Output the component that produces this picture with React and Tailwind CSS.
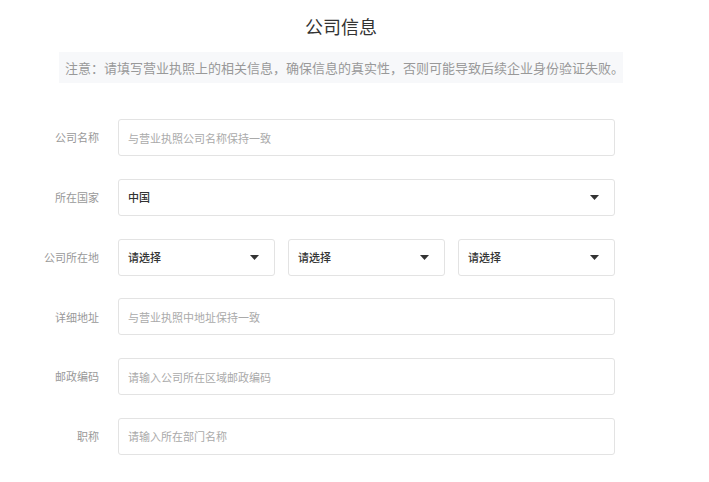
import React from 'react';

const font = { fontFamily: '"PingFang SC", "Noto Sans CJK SC", "Noto Sans", sans-serif' };

function Caret() {
    return (
        <svg width="9" height="5" viewBox="0 0 9 5" className="shrink-0">
            <path d="M0 0 H9 L4.5 5 Z" fill="#333" />
        </svg>
    );
}

function Row({ label, children }) {
    return (
        <div className="flex items-center h-[37px]">
            <label className="w-[100px] pr-[1px] text-right text-[11px] text-[#999]">{label}</label>
            <div className="ml-[18px] w-[497px] flex gap-[13px]">{children}</div>
        </div>
    );
}

function TextInput({ placeholder }) {
    return (
        <input
            className="w-full h-[37px] rounded-[3px] border border-[#e3e3e3] bg-white px-[9px] text-[11px] text-[#333] placeholder:text-[#aaa] outline-none"
            placeholder={placeholder}
            style={font}
        />
    );
}

function Select({ value }) {
    return (
        <div className="flex-1 h-[37px] rounded-[3px] border border-[#e3e3e3] bg-white pl-[9px] pr-[15px] flex items-center justify-between">
            <span className="text-[11px] text-[#333] font-medium">{value}</span>
            <Caret />
        </div>
    );
}

export default function App() {
    return (
        <div className="w-[709px] h-[482px] bg-white overflow-hidden" style={font}>
            <h2 className="pt-[14px] ml-[305px] text-[18px] leading-[24px] text-[#333] font-normal">公司信息</h2>

            <div className="mt-[14px] ml-[59px] w-[564px] h-[31px] bg-[#f7f8fa] pl-[6px] flex items-center text-[13px] text-[#999] whitespace-nowrap">
                注意：请填写营业执照上的相关信息，确保信息的真实性，否则可能导致后续企业身份验证失败。
            </div>

            <div className="mt-[36px] flex flex-col gap-[22.8px]">
                <Row label="公司名称">
                    <TextInput placeholder="与营业执照公司名称保持一致" />
                </Row>
                <Row label="所在国家">
                    <Select value="中国" />
                </Row>
                <Row label="公司所在地">
                    <Select value="请选择" />
                    <Select value="请选择" />
                    <Select value="请选择" />
                </Row>
                <Row label="详细地址">
                    <TextInput placeholder="与营业执照中地址保持一致" />
                </Row>
                <Row label="邮政编码">
                    <TextInput placeholder="请输入公司所在区域邮政编码" />
                </Row>
                <Row label="职称">
                    <TextInput placeholder="请输入所在部门名称" />
                </Row>
            </div>
        </div>
    );
}
